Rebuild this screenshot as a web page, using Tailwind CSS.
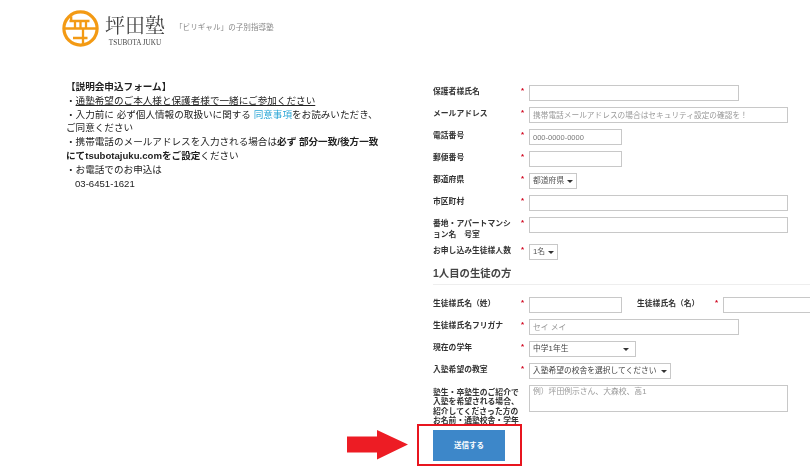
<!DOCTYPE html>
<html lang="ja">
<head>
  <meta charset="UTF-8" />
  <title>坪田塾 説明会申込フォーム</title>
  <script src="https://cdn.jsdelivr.net/npm/@tailwindcss/browser@4"></script>
</head>
<body class="bg-white text-[#333] overflow-hidden font-['Liberation_Sans','Noto_Sans_CJK_JP',sans-serif]">
<div class="relative w-[810px] h-[466px] overflow-hidden blur-[0.3px]">

  <!-- header -->
  <header class="flex items-start h-[50px] pl-[62px] pt-[10px]">
    <svg class="shrink-0" width="37" height="37" viewBox="0 0 37 37" fill="none" stroke="#f39a14" stroke-width="3.2">
      <circle cx="18.5" cy="18.5" r="16.6" />
      <path d="M9.2 6.2V11M7.5 11H27.5M2 18.5H35M13 11V18.5M18.5 11V18.5M24 11V18.5M11 28H25.5M21 18.5V35" stroke-width="2.3" />
    </svg>
    <div class="ml-[6px] flex flex-col items-center w-[60px]">
      <span class="text-[20px] leading-[26px] mt-[2px] text-[#444] font-['Noto_Serif_CJK_JP','Noto_Sans_CJK_JP',serif]">坪田塾</span>
      <span class="text-[7.2px] leading-[10px] text-[#444] font-['Liberation_Serif',serif] whitespace-nowrap">TSUBOTA JUKU</span>
    </div>
    <span class="ml-[10px] mt-[13px] text-[7.6px] leading-[10px] text-[#888] whitespace-nowrap">「ビリギャル」の子別指導塾</span>
  </header>

  <div class="flex">
    <!-- left text -->
    <section class="w-[367px] ml-[66px] mt-[30px] text-[9.6px] leading-[13.8px] text-[#222]">
      <p class="font-bold">【説明会申込フォーム】</p>
      <p>・<span class="underline">通塾希望のご本人様と保護者様で一緒にご参加ください</span></p>
      <p class="w-[320px]">・入力前に 必ず個人情報の取扱いに関する <span class="text-[#2ba6d6]">同意事項</span>をお読みいただき、ご同意ください</p>
      <p class="w-[320px]">・携帯電話のメールアドレスを入力される場合は<b>必ず 部分一致/後方一致にてtsubotajuku.comをご設定</b>ください</p>
      <p>・お電話でのお申込は</p>
      <p class="pl-[9px]">03-6451-1621</p>
    </section>

    <!-- form -->
    <form class="pt-[35px] text-[7.8px] text-[#333] font-bold w-[377px] shrink-0 overflow-hidden">
      <div class="flex h-[16px] mb-[6px]">
        <label class="w-[88px] shrink-0 leading-[14px]">保護者様氏名</label><span class="w-[8px] shrink-0 text-[#d0021b] leading-[12px]">*</span>
        <input class="w-[210px] h-[16px] border border-[#c8c8c8] bg-white" />
      </div>
      <div class="flex h-[16px] mb-[6px]">
        <label class="w-[88px] shrink-0 leading-[14px]">メールアドレス</label><span class="w-[8px] shrink-0 text-[#d0021b] leading-[12px]">*</span>
        <input class="w-[259px] h-[16px] border border-[#c8c8c8] bg-white px-[3px] text-[7.7px] font-normal placeholder:text-[#999]" placeholder="携帯電話メールアドレスの場合はセキュリティ設定の確認を！" />
      </div>
      <div class="flex h-[16px] mb-[6px]">
        <label class="w-[88px] shrink-0 leading-[14px]">電話番号</label><span class="w-[8px] shrink-0 text-[#d0021b] leading-[12px]">*</span>
        <input class="w-[93px] h-[16px] border border-[#c8c8c8] bg-white px-[3px] text-[7.5px] font-normal placeholder:text-[#777]" placeholder="000-0000-0000" />
      </div>
      <div class="flex h-[16px] mb-[6px]">
        <label class="w-[88px] shrink-0 leading-[14px]">郵便番号</label><span class="w-[8px] shrink-0 text-[#d0021b] leading-[12px]">*</span>
        <input class="w-[93px] h-[16px] border border-[#c8c8c8] bg-white" />
      </div>
      <div class="flex h-[16px] mb-[6px]">
        <label class="w-[88px] shrink-0 leading-[14px]">都道府県</label><span class="w-[8px] shrink-0 text-[#d0021b] leading-[12px]">*</span>
        <div class="w-[48px] h-[16px] border border-[#c8c8c8] flex items-center justify-between px-[3px] text-[7.8px] font-normal text-[#555]">都道府県<i class="border-x-[3px] border-x-transparent border-t-[3px] border-t-[#333]"></i></div>
      </div>
      <div class="flex h-[16px] mb-[6px]">
        <label class="w-[88px] shrink-0 leading-[14px]">市区町村</label><span class="w-[8px] shrink-0 text-[#d0021b] leading-[12px]">*</span>
        <input class="w-[259px] h-[16px] border border-[#c8c8c8] bg-white" />
      </div>
      <div class="flex h-[16px] mb-[11px]">
        <label class="w-[80px] mr-[8px] shrink-0 leading-[10.5px] pt-[2px]">番地・アパートマンション名　号室</label><span class="w-[8px] shrink-0 text-[#d0021b] leading-[12px]">*</span>
        <input class="w-[259px] h-[16px] border border-[#c8c8c8] bg-white" />
      </div>
      <div class="flex h-[16px] mb-[6px]">
        <label class="w-[88px] shrink-0 leading-[14px] whitespace-nowrap">お申し込み生徒様人数</label><span class="w-[8px] shrink-0 text-[#d0021b] leading-[12px]">*</span>
        <div class="w-[29px] h-[16px] border border-[#c8c8c8] flex items-center justify-between px-[3px] text-[7.8px] font-normal text-[#555]">1名<i class="border-x-[3px] border-x-transparent border-t-[3px] border-t-[#333]"></i></div>
      </div>
      <h2 class="text-[10.4px] leading-[14px] font-bold text-[#444] pt-[1px] pb-[3px] border-b border-[#eee] mb-[12px]">1人目の生徒の方</h2>
      <div class="flex h-[16px] mb-[6px]">
        <label class="w-[88px] shrink-0 leading-[14px]">生徒様氏名（姓）</label><span class="w-[8px] shrink-0 text-[#d0021b] leading-[12px]">*</span>
        <input class="w-[93px] shrink-0 h-[16px] border border-[#c8c8c8] bg-white" />
        <label class="w-[78px] shrink-0 ml-[15px] leading-[14px]">生徒様氏名（名）</label><span class="w-[8px] shrink-0 text-[#d0021b] leading-[12px]">*</span>
        <input class="w-[100px] shrink-0 h-[16px] border border-[#c8c8c8] bg-white" />
      </div>
      <div class="flex h-[16px] mb-[6px]">
        <label class="w-[88px] shrink-0 leading-[14px]">生徒様氏名フリガナ</label><span class="w-[8px] shrink-0 text-[#d0021b] leading-[12px]">*</span>
        <input class="w-[210px] h-[16px] border border-[#c8c8c8] bg-white px-[3px] text-[7.8px] font-normal placeholder:text-[#999]" placeholder="セイ メイ" />
      </div>
      <div class="flex h-[16px] mb-[6px]">
        <label class="w-[88px] shrink-0 leading-[14px]">現在の学年</label><span class="w-[8px] shrink-0 text-[#d0021b] leading-[12px]">*</span>
        <div class="w-[107px] h-[16px] border border-[#c8c8c8] flex items-center justify-between pl-[3px] pr-[6px] text-[7.8px] font-normal text-[#444]">中学1年生<i class="border-x-[3px] border-x-transparent border-t-[3px] border-t-[#333]"></i></div>
      </div>
      <div class="flex h-[16px] mb-[6px]">
        <label class="w-[88px] shrink-0 leading-[14px]">入塾希望の教室</label><span class="w-[8px] shrink-0 text-[#d0021b] leading-[12px]">*</span>
        <div class="w-[142px] h-[16px] border border-[#c8c8c8] flex items-center justify-between px-[3px] text-[7.75px] font-normal text-[#444] whitespace-nowrap">入塾希望の校舎を選択してください<i class="border-x-[3px] border-x-transparent border-t-[3px] border-t-[#333]"></i></div>
      </div>
      <div class="flex h-[38px] mb-[7px]">
        <label class="w-[88px] shrink-0 leading-[9.3px] pt-[3px]">塾生・卒塾生のご紹介で入塾を希望される場合、紹介してくださった方のお名前・通塾校舎・学年</label><span class="w-[8px] shrink-0"></span>
        <textarea class="w-[259px] h-[27px] border border-[#c8c8c8] bg-white px-[3px] text-[7.8px] font-normal resize-none placeholder:text-[#999]" placeholder="例）坪田例示さん、大森校、高1"></textarea>
      </div>
      <button type="button" class="w-[72px] h-[31px] bg-[#3d87c9] text-white text-[7.5px] font-bold">送信する</button>
    </form>
  </div>

  <!-- annotation over the submit button -->
  <div class="absolute left-[417px] top-[424px] w-[105px] h-[42px] border-[2px] border-[#e8151f]"></div>
  <svg class="absolute left-[347px] top-[430px]" width="62" height="30" viewBox="0 0 62 30">
    <path d="M0 6.5H30V0L61 14.5L30 29.5V22.5H0Z" fill="#ed1c24" />
  </svg>
</div>
</body>
</html>
